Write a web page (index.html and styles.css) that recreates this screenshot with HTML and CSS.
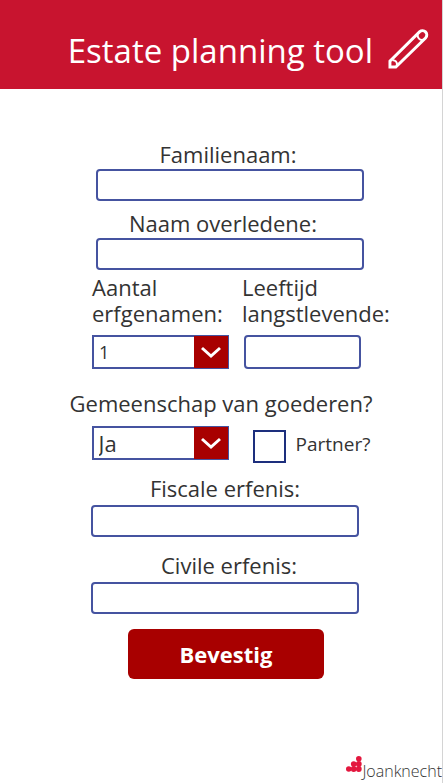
FILE: index.html
```html
<!DOCTYPE html>
<html lang="nl">
<head>
<meta charset="utf-8">
<meta name="viewport" content="width=device-width, initial-scale=1">
<title>Estate planning tool</title>
<link rel="stylesheet" href="styles.css">
</head>
<body>
<header class="header">
  <h1 class="title">Estate planning tool</h1>
  <svg class="pencil" viewBox="0 0 42 42" aria-hidden="true">
    <path d="M2 39.500V33.500L32.500 3.200A4.400 4.400 0 0 1 38.700 9.400L8 39.500Z"/>
    <path class="thin" d="M4.500 32.500A4 4 0 0 1 9 37.500M30.500 6A4.500 4.500 0 0 0 36 11.500"/>
  </svg>
</header>
<main>
  <form class="form">
    <section class="group">
      <label class="label" for="family">Familienaam:</label>
      <input class="box" id="family" type="text">
      <label class="label next" for="deceased">Naam overledene:</label>
      <input class="box" id="deceased" type="text">
    </section>
    <section class="pair">
      <div class="cell">
        <label class="label" for="heirs">Aantal erfgenamen:</label>
        <div class="picker">
          <select class="select small" id="heirs"><option>1</option><option>2</option><option>3</option></select>
          <svg class="arrow" viewBox="0 0 34 32" aria-hidden="true"><path d="M8 12L17 20L26 12"/></svg>
        </div>
      </div>
      <div class="cell">
        <label class="label" for="age">Leeftijd langstlevende:</label>
        <input class="box age" id="age" type="text">
      </div>
    </section>
    <section class="community">
      <label class="label" for="community">Gemeenschap van goederen?</label>
      <div class="choices">
        <div class="picker">
          <select class="select" id="community"><option>Ja</option><option>Nee</option></select>
          <svg class="arrow" viewBox="0 0 34 32" aria-hidden="true"><path d="M8 12L17 20L26 12"/></svg>
        </div>
        <input class="check" id="partner" type="checkbox">
        <label class="partner" for="partner">Partner?</label>
      </div>
    </section>
    <section class="group lower">
      <label class="label" for="fiscal">Fiscale erfenis:</label>
      <input class="box" id="fiscal" type="text">
      <label class="label civil" for="civil">Civile erfenis:</label>
      <input class="box" id="civil" type="text">
    </section>
    <button class="submit" type="submit">Bevestig</button>
  </form>
</main>
<footer class="footer">
  <svg class="dots" viewBox="0 0 16 16" aria-hidden="true">
    <circle cx="12.800" cy="2.800" r="2.800"/>
    <circle cx="7.700" cy="8" r="2.800"/><circle cx="12.800" cy="8" r="2.900"/>
    <circle cx="2.800" cy="13" r="2.800"/><circle cx="7.700" cy="13" r="2.900"/><circle cx="12.800" cy="13" r="2.900"/>
  </svg>
  <span class="brand">Joanknecht</span>
</footer>
</body>
</html>
```
FILE: styles.css
```css
* {
  box-sizing: border-box;
}

body {
  margin: 0;
  min-height: 100vh;
  display: flex;
  flex-direction: column;
  border-right: 1px solid #d4d4d4;
  background: #fff;
  color: #333;
  font-family: "Open Sans", "Noto Sans", sans-serif;
}

.header {
  display: flex;
  align-items: center;
  justify-content: flex-end;
  gap: 15px;
  height: 89px;
  padding: 8px 13px 0 0;
  background: #c8142f;
}

.title {
  margin: 0;
  padding-top: 4px;
  color: #fff;
  font-size: 33px;
  font-weight: 400;
  line-height: 48px;
}

.pencil {
  width: 41px;
  height: 42px;
  fill: none;
  stroke: #fff;
  stroke-width: 3;
}

.pencil .thin {
  stroke-width: 2;
}

main {
  flex: 1;
}

.form {
  display: flex;
  flex-direction: column;
  align-items: center;
  padding: 52px 0 0 14px;
}

.group {
  display: flex;
  flex-direction: column;
  align-items: center;
  gap: 2px;
  padding-left: 4px;
}

.label {
  font-size: 22px;
  font-weight: 400;
  line-height: 26px;
}

.group .label {
  padding-right: 4px;
}

.group .next {
  margin-top: 7px;
  padding-right: 14px;
}

.box {
  width: 268px;
  height: 32px;
  padding: 0 8px;
  border: 2px solid #4553a0;
  border-radius: 4px;
  background: #fff;
  color: inherit;
  font: inherit;
}

.pair {
  display: grid;
  grid-template-columns: 137px 152px;
  gap: 13px;
  margin: 4px 0 0 30px;
}

.cell {
  display: flex;
  flex-direction: column;
  gap: 9px;
}

.age {
  width: 117px;
  height: 34px;
  margin-left: 2px;
}

.picker {
  position: relative;
  width: 137px;
}

.select {
  display: block;
  width: 100%;
  height: 34px;
  padding: 0 40px 0 5px;
  border: 2px solid #4553a0;
  border-radius: 0;
  appearance: none;
  background: #fff;
  color: #333;
  font-family: inherit;
  font-size: 22px;
  font-weight: 400;
}

.small {
  font-size: 18px;
}

.arrow {
  position: absolute;
  top: 1px;
  right: 1px;
  width: 34px;
  height: 32px;
  background: #a80000;
  fill: none;
  stroke: #fff;
  stroke-width: 3;
  pointer-events: none;
}

.community {
  display: flex;
  flex-direction: column;
  align-items: center;
  gap: 10px;
  margin: 21px 14px 0 0;
}

.choices {
  display: flex;
  align-items: flex-start;
  padding-left: 20px;
}

.check {
  width: 33px;
  height: 33px;
  margin: 4px 10px 0 24px;
  border: 2px solid #1d2f7d;
  appearance: none;
  background: #fff;
}

.partner {
  margin-top: 5px;
  font-size: 19px;
  font-weight: 400;
  line-height: 26px;
}

.lower {
  gap: 4px;
  margin-top: 12px;
  padding: 0 6px 0 0;
}

.lower .label {
  padding: 0;
}

.lower .civil {
  margin-top: 11px;
  padding-left: 8px;
}

.submit {
  width: 196px;
  height: 50px;
  margin: 15px 4px 0 0;
  border: 0;
  border-radius: 6px;
  background: #a80000;
  color: #fff;
  font-family: inherit;
  font-size: 22px;
  font-weight: 700;
}

.footer {
  display: flex;
  align-items: flex-start;
  justify-content: flex-end;
  height: 27px;
}

.dots {
  width: 16px;
  height: 16px;
  fill: #e3173e;
}

.brand {
  margin-top: 4px;
  color: #333;
  font-size: 16px;
  font-weight: 300;
  line-height: 22px;
}
```
